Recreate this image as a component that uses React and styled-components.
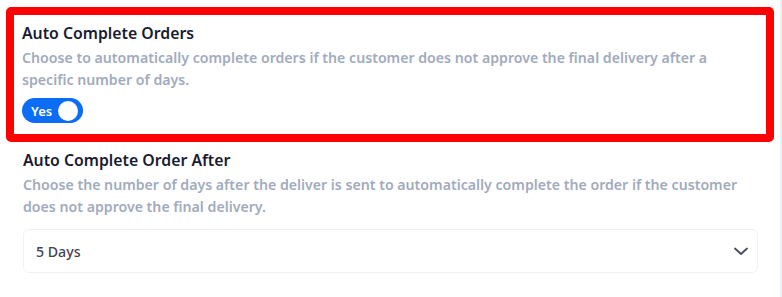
import React, { useState } from 'react';
import styled, { createGlobalStyle } from 'styled-components';

const GlobalStyle = createGlobalStyle`
  html, body {
    margin: 0;
    padding: 0;
    background: #eef1f5;
  }
  body {
    font-family: "Noto Sans", "Open Sans", sans-serif;
    -webkit-font-smoothing: antialiased;
  }
`;

const Panel = styled.div`
  width: 780px;
  min-height: 297px;
  background: #ffffff;
  padding: 7px 6px 0 6px;
  box-sizing: border-box;
`;

const Highlight = styled.div`
  border: 8px solid #ff0000;
  border-radius: 5px;
  padding: 7px 8px 11px 8px;
`;

const Field = styled.div`
  display: flex;
  flex-direction: column;
  padding: ${(p) => (p.$plain ? '7px 16px 0 17px' : '0')};
`;

const Label = styled.div`
  font-size: 15.8px;
  font-weight: 600;
  line-height: 22px;
  color: #181c32;
`;

const Hint = styled.div`
  margin-top: 3px;
  font-size: 14.15px;
  font-weight: 600;
  line-height: 22px;
  color: #a1abbe;
`;

const Switch = styled.button`
  margin-top: 7px;
  width: 61px;
  height: 25px;
  border: none;
  border-radius: 13px;
  background: #0b6cf6;
  display: flex;
  align-items: center;
  justify-content: space-between;
  padding: 0 5px 0 9px;
  cursor: pointer;
  font-family: inherit;
`;

const SwitchText = styled.span`
  color: #ffffff;
  font-size: 13px;
  font-weight: 600;
`;

const Knob = styled.span`
  width: 20px;
  height: 20px;
  border-radius: 50%;
  background: #ffffff;
`;

const Select = styled.div`
  margin-top: 11px;
  height: 44px;
  border: 1px solid #eff2f5;
  border-radius: 6px;
  box-sizing: border-box;
  display: flex;
  align-items: center;
  justify-content: space-between;
  padding: 0 8px 0 12px;
  font-size: 14.15px;
  font-weight: 500;
  color: #3f4254;
`;

const Chevron = () => (
  <svg width="16" height="16" viewBox="0 0 16 16" fill="none">
    <path d="M2 5.5 L8 11 L14 5.5" stroke="#474b5e" strokeWidth="1.8" strokeLinecap="round" strokeLinejoin="round" />
  </svg>
);

export default function App() {
  const [on, setOn] = useState(true);
  return (
    <>
      <GlobalStyle />
      <Panel>
        <Highlight>
          <Field>
            <Label>Auto Complete Orders</Label>
            <Hint>
              Choose to automatically complete orders if the customer does not approve the final delivery after a
              specific number of days.
            </Hint>
            <Switch onClick={() => setOn(!on)}>
              <SwitchText>Yes</SwitchText>
              <Knob />
            </Switch>
          </Field>
        </Highlight>
        <Field $plain>
          <Label>Auto Complete Order After</Label>
          <Hint>
            Choose the number of days after the deliver is sent to automatically complete the order if the customer
            does not approve the final delivery.
          </Hint>
          <Select>
            <span>5 Days</span>
            <Chevron />
          </Select>
        </Field>
      </Panel>
    </>
  );
}
